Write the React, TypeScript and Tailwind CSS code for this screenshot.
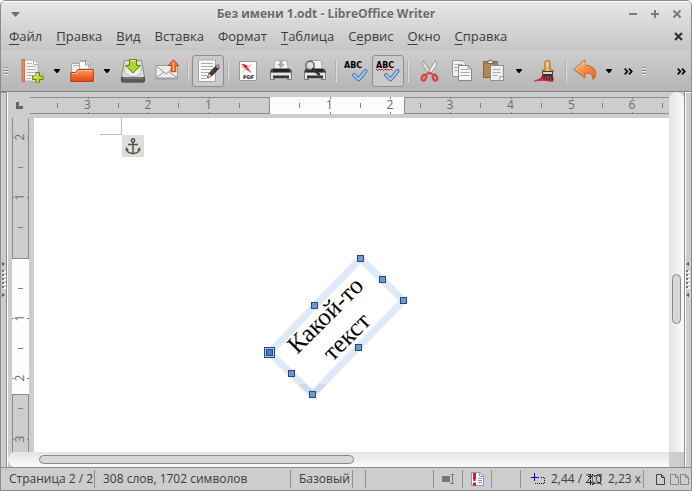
import React from "react";

const MENU: [string, string, string][] = [
  ["", "Ф", "айл"],
  ["", "П", "равка"],
  ["", "В", "ид"],
  ["Вст", "а", "вка"],
  ["Фо", "р", "мат"],
  ["", "Т", "аблица"],
  ["С", "е", "рвис"],
  ["", "О", "кно"],
  ["", "С", "правка"],
];

function Svg({ children }: { children: React.ReactNode }) {
  return (
    <svg width="24" height="24" viewBox="0 0 24 24" fill="none" aria-hidden="true">
      {children}
    </svg>
  );
}

function Tool({ label, width = "w-[34px]", pressed = false, children }: { label: string; width?: string; pressed?: boolean; children: React.ReactNode }) {
  return (
    <button
      type="button"
      aria-label={label}
      className={
        "flex h-8 shrink-0 items-center justify-center rounded-[3px] " +
        width +
        (pressed ? " border border-[#8e8e8e] bg-[#cacaca]" : "")
      }
    >
      {children}
    </button>
  );
}

function Arrow({ label }: { label: string }) {
  return (
    <button type="button" aria-label={label} className="flex h-8 w-[18px] shrink-0 items-center justify-center">
      <svg width="6" height="4" viewBox="0 0 6 4" aria-hidden="true">
        <path d="M0 0h6v1L3.500 4h-1L0 1z" fill="#000" />
      </svg>
    </button>
  );
}

function Sep() {
  return (
    <div className="flex h-8 w-2 shrink-0 items-center justify-center">
      <div className="h-[22px] w-[2px] border-l border-[#b0b0b0] bg-[#dddddd]" />
    </div>
  );
}

function Grip() {
  return (
    <div className="flex w-1 shrink-0 flex-col gap-px">
      {[0, 1, 2].map((i) => (
        <div key={i} className="h-[2px] border-b border-[#eeeeee] bg-[#858585]" />
      ))}
    </div>
  );
}

function More({ label }: { label: string }) {
  return (
    <button type="button" aria-label={label} className="flex h-8 w-5 shrink-0 items-center justify-center">
      <svg width="9" height="7" viewBox="0 0 9 7" fill="none" stroke="#000" strokeWidth="1.700" aria-hidden="true">
        <path d="M.7.6l2.700 2.900L.7 6.400M5 .6l2.700 2.900L5 6.400" />
      </svg>
    </button>
  );
}

const NewIcon = () => (
  <Svg>
    <path d="M3.500 1h10l4.500 4.500V22H3.500z" fill="#f4f4f2" stroke="#b2b2ae" />
    <path d="M13.500 1v4.500H18" fill="#fff" stroke="#aaa" />
    <path d="M7 4.500h5M7 7.500h9M7 10.500h9M7 13.500h9M7 16.500h6M7 19.500h4" stroke="#b5b5b2" />
    <path d="M2 .5h2.500v22H2z" fill="#ef8758" stroke="#c95320" strokeWidth=".7" />
    <path d="M16 13.500h3.500V17H23v3.500h-3.500V24H16v-3.500h-3.500V17H16z" fill="#b9dc36" stroke="#5e860d" />
    <path d="M17 14.500V18h-3.500" stroke="#e7f590" />
  </Svg>
);

const OpenIcon = () => (
  <Svg>
    <path d="M1.500 19V4.500h7l2-3H17l3 3V19z" fill="#efefed" stroke="#a8a8a8" />
    <path d="M3.500 6.500h6M9.500 10V2.500h6l3 3V10z" fill="#fff" stroke="#b5b5b5" />
    <path d="M15.500 2v4h4" stroke="#999" />
    <path d="M.8 13.500h5l2-3h15.500v12H.8z" fill="url(#folder)" stroke="#bb3e10" />
    <path d="M2 14.500h4.500l2-3h13.800" stroke="#ffc19b" />
    <defs>
      <linearGradient id="folder" x1="0" y1="10" x2="0" y2="23" gradientUnits="userSpaceOnUse">
        <stop stopColor="#f9a16a" />
        <stop offset=".6" stopColor="#ef642b" />
        <stop offset="1" stopColor="#df4310" />
      </linearGradient>
    </defs>
  </Svg>
);

const SaveIcon = () => (
  <Svg>
    <path d="M3.500 1.500h17l3 16.500v5H.5v-5z" fill="#dededc" stroke="#8a8a8a" />
    <ellipse cx="12" cy="11" rx="8.500" ry="6.500" fill="#ececea" stroke="#bbb" />
    <path d="M.5 18.500h23v3.500l-1 1h-21l-1-1z" fill="#5c5c5c" stroke="#494949" />
    <path d="M2 19h20" stroke="#999" />
    <path d="M8.500.5h7v6h4L12 14 4.500 6.500h4z" fill="#afd62e" stroke="#5a860c" />
    <path d="M9.500 1.500h5" stroke="#e6f795" />
  </Svg>
);

const MailIcon = () => (
  <Svg>
    <path d="M1 6.500h21.500V19H1z" fill="#ededeb" stroke="#9b9b9b" />
    <path d="M1.500 7L11 15l10-8M1.500 18.500L9 13M22 18.500L14 13" stroke="#8c8c8c" strokeWidth=".9" />
    <path d="M0 20h23" stroke="#777" strokeOpacity=".5" />
    <path d="M18.500.8l5.200 5.700h-2.900v6.200h-4.600V6.500h-2.900z" fill="#f37d3b" stroke="#c0400a" />
    <path d="M18.500 2.500v9" stroke="#f9b38a" />
  </Svg>
);

const EditIcon = () => (
  <Svg>
    <path d="M2.500 1h17v21.500h-17z" fill="#fafafa" stroke="#a6a6a6" />
    <path d="M5 4.500h12M5 7.500h12M5 10.500h11M5 13.500h8M5 16.500h6M5 19.500h5" stroke="#aaa" />
    <path d="M13 14.500l7.500-8 2.700 2.500-7.700 8-4 1.800z" fill="#353832" stroke="#20231f" />
    <path d="M13 14.500l2.500 2.500-4 1.800z" fill="#efd9a9" />
    <path d="M12 17.500l1 .7-1.500.8z" fill="#111" />
    <path d="M14.500 14.500l6-6.500" stroke="#6a8033" strokeWidth=".7" />
    <path d="M19.500 7.300l1.500-1.500q1-.6 2 .4t.4 2L22 9.700z" fill="#d58bb0" stroke="#754460" strokeWidth=".6" />
  </Svg>
);

const PdfIcon = () => (
  <Svg>
    <path d="M3.500 2.500h17v19h-17z" fill="#fff" stroke="#999996" />
    <path d="M5.500 4.500l5 1.500 5 8-5.500-3.500z" fill="#ee1b24" />
    <path d="M6 13.500L15 5.500l-3 4 3 4" stroke="#f3a5a0" strokeWidth=".8" />
    <path d="M5 8l6 2M5 5l4 5" stroke="#f59a94" strokeWidth=".7" />
    <text x="7" y="20" fontFamily="DejaVu Sans, sans-serif" fontWeight="700" fontSize="5" fill="#222">PDF</text>
  </Svg>
);

const Printer = () => (
  <>
    <path d="M4.500 12L6 1.500h12L19.500 12z" fill="#f4f4f3" stroke="#aaa" />
    <path d="M2.500 10.500h3v3h13v-3h3l1 3v5h-21v-5z" fill="#454545" stroke="#333" />
    <path d="M4 9.500h16v4H4z" fill="#242424" />
    <path d="M1.500 13.500h21v7h-21z" fill="#e5e5e2" stroke="#777" />
    <path d="M4 16.500h16v3H4z" fill="#343434" />
    <path d="M6 19.500h12v2H6z" fill="#bcbcba" />
  </>
);

const PrintIcon = () => (
  <Svg>
    <Printer />
    <path d="M10.500 2h3v3H16l-4 4-4-4h2.500z" fill="#aaa" />
  </Svg>
);

const PreviewIcon = () => (
  <Svg>
    <Printer />
    <circle cx="7" cy="6.500" r="4.200" fill="#dcdcda" fillOpacity=".8" stroke="#666" strokeWidth="1.500" />
    <path d="M10 10l6 5.500" stroke="#333" strokeWidth="2.500" strokeLinecap="round" />
  </Svg>
);

const SpellIcon = ({ wave = false }: { wave?: boolean }) => (
  <Svg>
    <text x="0" y="9" fontFamily="DejaVu Sans, sans-serif" fontWeight="700" fontSize="8" fill="#000">ABC</text>
    {wave && <path d="M0 10l1.500 1.500L3 10l1.500 1.500L6 10l1.500 1.500L9 10l1.500 1.500L12 10l1.500 1.500L15 10l1.500 1.500" stroke="#e20613" strokeWidth=".9" />}
    <path d="M10 16l4.500 4.500L21.500 12" stroke="#3465a4" strokeWidth="3.800" strokeLinecap="round" strokeLinejoin="round" />
    <path d="M10 16l4.500 4.500L21.500 12" stroke="#a5c8ee" strokeWidth="2.200" strokeLinecap="round" strokeLinejoin="round" />
  </Svg>
);

const CutIcon = () => (
  <Svg>
    <path d="M6.500 1.500q-2 2.500-.5 5.500l6 8.500 2.500-1.500z" fill="#dededc" stroke="#888" strokeWidth=".8" />
    <path d="M18.500 1.500q2 2.500.5 5.500l-6 8.500-2.500-1.500z" fill="#f0f0ef" stroke="#888" strokeWidth=".8" />
    <ellipse cx="7" cy="18.700" rx="2" ry="3" transform="rotate(20 7 18.700)" stroke="#d24545" strokeWidth="2.300" />
    <ellipse cx="18" cy="18.700" rx="2" ry="3" transform="rotate(-20 18 18.700)" stroke="#d24545" strokeWidth="2.300" />
    <path d="M8.500 16l4-2.500 4 2.500" stroke="#d54a4a" strokeWidth="2" />
  </Svg>
);

const CopyIcon = () => (
  <Svg>
    <path d="M2.500 1.500h10l3 3v13h-13z" fill="#f1f1f0" stroke="#959595" />
    <path d="M4.500 5.500h8M4.500 8.500h3M4.500 11.500h3" stroke="#aaa" />
    <path d="M8.500 6.500h10l3 3v12h-13z" fill="#f6f6f5" stroke="#888" />
    <path d="M10.500 10.500h7M10.500 13.500h9M10.500 16.500h9" stroke="#aaa" />
    <path d="M18 6.500v3.500h3.500" stroke="#888" />
  </Svg>
);

const PasteIcon = () => (
  <Svg>
    <path d="M1.500 2.500h14v16h-14z" fill="#b0894f" stroke="#8a622f" />
    <path d="M4.500 4.500V3h2q0-2 2-2t2 2h2v1.500z" fill="#e9e9e7" stroke="#666" />
    <path d="M8.500 6.500h13v15h-13z" fill="#f0f0ef" stroke="#8b8b8b" />
    <path d="M10.500 10.500h8M10.500 13.500h8M10.500 16.500h5" stroke="#aaa" />
    <path d="M18 21v-3.500h3.500" fill="#fff" stroke="#999" />
  </Svg>
);

const BrushIcon = () => (
  <Svg>
    <path d="M.5 21.500q7-1 9-5.500h10q2 4 0 6.500-8-1-19-1z" fill="#c9343b" />
    <path d="M12 11V3.500q0-2 2.500-2t2.500 2V11h3v2H9.500v-2z" fill="#efbd63" stroke="#9b651b" />
    <path d="M14 3.500v4" stroke="#fce4ac" />
    <path d="M9.500 12.500h10v3h-10z" fill="#d5d5d3" stroke="#3b3b3b" />
    <path d="M9.500 15.500h10l1 6q-7 0-12-2z" fill="#42282c" />
    <path d="M11 17l-2 3M13 17l-1 4M15 17v4M17 17l1 4" stroke="#dc4a50" />
    <path d="M1 22q9-2 19 .5" stroke="#d92a34" />
  </Svg>
);

const UndoIcon = () => (
  <Svg>
    <path d="M.8 10.500l11-9.500v5q11 1 11 9-.2 4-3 5.500 1-7-8-6.500v5z" fill="url(#undo)" stroke="#c86522" />
    <path d="M2.500 10.500l8.500-7.500v4" stroke="#ffdaa8" />
    <defs>
      <linearGradient id="undo" x1="0" y1="0" x2="20" y2="20" gradientUnits="userSpaceOnUse">
        <stop stopColor="#fbc477" />
        <stop offset="1" stopColor="#ee682e" />
      </linearGradient>
    </defs>
  </Svg>
);

function Splitter({ side }: { side: "left" | "right" }) {
  return (
    <div className={side === "left" ? "flex w-[7px] shrink-0 items-center justify-center border-r border-white bg-[#cdcdcd] shadow-[inset_-1px_1px_0_#8c8c8c]" : "flex w-[7px] shrink-0 items-center justify-center border-l border-[#8c8c8c] bg-[#cdcdcd] shadow-[inset_1px_1px_0_#ffffff]"}>
      <svg className="shrink-0" width="4" height="36" viewBox="0 0 4 36" aria-hidden="true">
        {[9, 13, 17, 21, 25].map((y) => (
          <g key={y}>
            <rect x="1" y={y} width="3" height="2" fill="#fff" />
            <rect y={y - 1} width="2" height="2" fill="#777" />
          </g>
        ))}
        <path d={side === "left" ? "M0 0v4l3-2zM0 31v4l3-2z" : "M3 0v4L0 2zM3 31v4l-3-2z"} fill="#555" />
      </svg>
    </div>
  );
}

const H_TICKS: [string, string][] = [
  ["3", "w-[61px]"],
  ["2", "w-[60px]"],
  ["1", "w-[61px]"],
  ["", "w-[60px]"],
  ["1", "w-[61px]"],
  ["2", "w-[60px]"],
  ["3", "w-[60px]"],
  ["4", "w-[61px]"],
  ["5", "w-[61px]"],
  ["6", "w-[60px]"],
];

function HorizontalRuler() {
  return (
    <div className="relative flex h-[17px] min-w-0 flex-1 overflow-hidden">
      <div className="w-[240px] shrink-0 border-y border-r border-[#8b8b8b]" />
      <div className="w-[134px] shrink-0 bg-[#fdfdfd]" />
      <div className="flex-1 border-y border-l border-[#8b8b8b]" />
      <div className="absolute inset-y-0 left-[27px] flex text-[12px] text-[#6c6c6c]">
        {H_TICKS.map(([n, w], i) => (
          <div key={i} className={"relative flex shrink-0 items-center justify-center " + w}>
            <span className="absolute left-0 h-[5px] w-px bg-[#808080]" />
            {n && <span className="absolute inset-y-0 left-1/2 w-px border-y-2 border-[#808080]" />}
            <span>{n}</span>
          </div>
        ))}
        <span className="my-[6px] w-px bg-[#808080]" />
      </div>
    </div>
  );
}

const V_TICKS: [string, string][] = [
  ["2", "h-[61px]"],
  ["1", "h-[60px]"],
  ["", "h-[61px]"],
  ["1", "h-[60px]"],
  ["2", "h-[60px]"],
  ["3", "h-[61px]"],
];

function VerticalRuler() {
  return (
    <div className="relative flex w-[17px] shrink-0 flex-col overflow-hidden">
      <div className="h-[141px] shrink-0 border-x border-b border-[#8b8b8b]" />
      <div className="h-[135px] shrink-0 bg-[#fdfdfd]" />
      <div className="flex-1 border-x border-t border-[#8b8b8b]" />
      <div className="absolute inset-x-0 top-[-12px] flex flex-col text-[12px] text-[#6c6c6c]">
        {V_TICKS.map(([n, h], i) => (
          <div key={i} className={"relative flex shrink-0 items-center justify-center " + h}>
            <span className="absolute top-0 h-px w-[5px] bg-[#808080]" />
            {n && <span className="absolute inset-x-0 top-1/2 h-px border-x-2 border-[#808080]" />}
            <span className="-rotate-90 leading-4">{n}</span>
          </div>
        ))}
      </div>
    </div>
  );
}

const HANDLES = [
  [360, 258],
  [382, 279],
  [403, 300],
  [358, 347],
  [312, 394],
  [291, 373],
  [314, 305],
];

function DocumentPage() {
  return (
    <div className="relative min-w-0 flex-1 overflow-hidden bg-white">
      <svg className="absolute inset-0" width="420" height="334" viewBox="34 118 420 334" aria-hidden="true">
        <path d="M121.500 118v16.500H100" fill="none" stroke="#bbbbbb" />
        <path d="M269.500 352.500l91-94 43 42-91 94z" fill="none" stroke="#deeaf8" strokeWidth="7" />
        <path d="M298 384h8l6.500 5.500L319 384h8l-14.500 14z" fill="#cbdbe9" />
        {HANDLES.map(([x, y]) => (
          <rect key={x} x={x - 2.500} y={y - 2.500} width="6" height="6" fill="#7298cb" stroke="#1f4a87" />
        ))}
        <rect x="264.500" y="347.500" width="10" height="10" fill="#b1c8e6" stroke="#1f4a87" />
        <rect x="266.500" y="349.500" width="6" height="6" fill="#4a7abb" stroke="#1f4a87" />
      </svg>
      <div className="absolute top-[17px] left-[88px] flex h-[22px] w-[22px] items-center justify-center bg-[#dcded9]">
        <svg width="16" height="17" viewBox="0 0 16 17" fill="none" stroke="#4f534d" strokeWidth="1.500" aria-label="Привязка">
          <circle cx="8" cy="2.500" r="1.700" />
          <path d="M8 4v11.500M3 6.500h10M1.500 10.500q.5 5 6.500 5t6.500-5" />
          <path d="M.5 13l.5-4 3 3zM15.500 13l-.5-4-3 3z" fill="#4f534d" stroke="none" />
        </svg>
      </div>
      <p className="absolute top-[178px] left-[242px] w-[120px] -rotate-45 text-center font-['Liberation_Serif',serif] text-[25px] leading-[30px] text-black">
        Какой-то
        <br />
        текст
      </p>
    </div>
  );
}

function Cell({ width, children }: { width: string; children?: React.ReactNode }) {
  return (
    <div className={"flex h-[18px] shrink-0 items-center overflow-hidden border-r border-[#909090] whitespace-nowrap " + width}>
      {children}
    </div>
  );
}

function PageGlyph({ label, color }: { label: string; color: string }) {
  return (
    <button type="button" aria-label={label} className="shrink-0">
      <svg width="9" height="11" viewBox="0 0 9 11" fill="none" stroke={color} aria-hidden="true">
        <path d="M.5.5h5l3 3v7h-8zM5.500.5v3h3" />
      </svg>
    </button>
  );
}

export default function App() {
  return (
    <div className="flex h-screen flex-col overflow-hidden rounded-t-[5px] border border-[#8b8b8b] bg-[#cdcdcd] font-['Open_Sans','Noto_Sans',sans-serif] text-[13px] text-[#3c3c3c]">
      <header className="shrink-0 bg-linear-to-b from-[#e7e7e7] to-[#c6c6c6]">
        <div className="flex h-[25px] items-center border-t border-white">
          <button type="button" aria-label="Меню окна" className="flex w-[29px] shrink-0 justify-center">
            <svg width="9" height="5" viewBox="0 0 9 5" aria-hidden="true">
              <path d="M0 0h9L4.500 5z" fill="#6b6b6b" />
            </svg>
          </button>
          <h1 className="flex-1 truncate text-center text-[12px] leading-5 font-bold text-[#6a6a6a] [text-shadow:0_1px_0_#f3f3f3]">
            Без имени 1.odt - LibreOffice Writer
          </h1>
          <div className="flex shrink-0 pr-[3px]">
            {[
              ["Свернуть", "M1 5h8"],
              ["Развернуть", "M1 5h8M5 1v8"],
              ["Закрыть", "M1.500 1.500l7 7M8.500 1.500l-7 7"],
            ].map(([label, d]) => (
              <button key={label} type="button" aria-label={label} className="flex h-5 w-[22px] items-center justify-center">
                <svg width="10" height="10" viewBox="0 0 10 10" fill="none" stroke="#7b7b7b" strokeWidth="2" aria-hidden="true">
                  <path d={d} />
                </svg>
              </button>
            ))}
          </div>
        </div>
        <nav className="flex h-[25px] items-start pl-px">
          {MENU.map(([a, key, b]) => (
            <button key={a + key + b} type="button" className="shrink-0 px-[7px] leading-5">
              {a}
              <span className="underline underline-offset-[3px]">{key}</span>
              {b}
            </button>
          ))}
          <button type="button" aria-label="Закрыть документ" className="ml-auto flex h-5 w-[26px] items-center justify-center">
            <svg width="9" height="9" viewBox="0 0 9 9" fill="none" stroke="#333" strokeWidth="2.200" aria-hidden="true">
              <path d="M1 1l7 7M8 1L1 8" />
            </svg>
          </button>
        </nav>
      </header>

      <div role="toolbar" aria-label="Стандартная" className="flex h-[41px] shrink-0 items-center border-b border-[#858585] bg-linear-to-b from-[#cecece] to-[#b5b5b5] pl-[3px]">
        <Grip />
        <div className="w-2 shrink-0" />
        <Tool label="Создать" width="w-8"><NewIcon /></Tool>
        <Arrow label="Создать: варианты" />
        <Tool label="Открыть" width="w-8"><OpenIcon /></Tool>
        <Arrow label="Открыть: варианты" />
        <Tool label="Сохранить"><SaveIcon /></Tool>
        <Tool label="Отправить"><MailIcon /></Tool>
        <Sep />
        <Tool label="Режим правки" width="w-8" pressed><EditIcon /></Tool>
        <Sep />
        <Tool label="Экспорт в PDF" width="w-8"><PdfIcon /></Tool>
        <Tool label="Печать"><PrintIcon /></Tool>
        <Tool label="Просмотр"><PreviewIcon /></Tool>
        <Sep />
        <Tool label="Орфография" width="w-8"><SpellIcon /></Tool>
        <Tool label="Автопроверка" width="w-8" pressed><SpellIcon wave /></Tool>
        <Sep />
        <Tool label="Вырезать"><CutIcon /></Tool>
        <Tool label="Копировать" width="w-8"><CopyIcon /></Tool>
        <Tool label="Вставить" width="w-8"><PasteIcon /></Tool>
        <Arrow label="Вставить: варианты" />
        <Tool label="Копировать формат"><BrushIcon /></Tool>
        <Sep />
        <Tool label="Отменить" width="w-[30px]"><UndoIcon /></Tool>
        <Arrow label="Отменить: варианты" />
        <More label="Ещё" />
        <div className="w-1 shrink-0" />
        <Grip />
        <div className="ml-auto">
          <More label="Ещё панели" />
        </div>
      </div>

      <div className="flex min-h-0 flex-1 border-b border-[#8c8c8c]">
        <Splitter side="left" />
        <main className="flex min-w-0 flex-1 flex-col">
          <div className="flex min-h-0 flex-1">
            <div className="flex min-w-0 flex-1 flex-col">
              <div className="flex h-[26px] shrink-0 items-center">
                <div className="flex w-[22px] shrink-0 justify-center">
                  <svg width="7" height="7" viewBox="0 0 7 7" aria-hidden="true">
                    <path d="M0 0h3v4h4v3H0z" fill="#666" />
                  </svg>
                </div>
                <HorizontalRuler />
              </div>
              <div className="flex min-h-0 flex-1 gap-[5px] pl-1">
                <VerticalRuler />
                <DocumentPage />
              </div>
            </div>
            <div className="flex w-[15px] shrink-0 flex-col items-center justify-center rounded-t-lg bg-linear-to-r from-[#e4e4e4] to-[#fafafa] pt-[54px]">
              <div className="h-[50px] w-[9px] rounded-full border border-[#8a8a8a] bg-[#d7d7d7]" />
            </div>
          </div>
          <div className="flex h-[15px] shrink-0">
            <div className="flex flex-1 items-center rounded-l-lg bg-linear-to-b from-[#e4e4e4] to-[#fafafa] pl-[31px]">
              <div className="h-[9px] w-1/2 rounded-full border border-[#8a8a8a] bg-[#d7d7d7]" />
            </div>
            <div className="w-[15px] shrink-0" />
          </div>
        </main>
        <Splitter side="right" />
      </div>

      <footer className="flex h-[22px] shrink-0 items-center text-[12px]">
        <Cell width="w-[94px] pl-2">Страница 2 / 2</Cell>
        <Cell width="w-[196px] pl-2">308 слов, 1702 символов</Cell>
        <Cell width="w-[62px] pl-2">Базовый</Cell>
        <Cell width="w-[13px]" />
        <Cell width="w-[68px]" />
        <Cell width="w-[29px] justify-center">
          <svg width="12" height="10" viewBox="0 0 12 10" fill="none" aria-hidden="true">
            <path d="M0 2h8v6H0z" fill="#777" />
            <path d="M8.500.5H12M8.500 9.500H12M10.500.5v9" stroke="#777" />
          </svg>
        </Cell>
        <Cell width="w-[29px] justify-center">
          <svg width="14" height="14" viewBox="0 0 14 14" fill="none" aria-hidden="true">
            <path d="M1.500.5h8l4 4v9h-12z" fill="#fff" stroke="#9290d8" />
            <path d="M9.500.5v4h4M8 6.500h4M8 8.500h4M8 10.500h4" stroke="#9290d8" />
            <path d="M3 1h3v5L5.500 9h-2L3 6zM3 10.500h3v3H3z" fill="#ef1020" />
          </svg>
        </Cell>
        <Cell width="w-[29px]" />
        <Cell width="w-[123px] pl-[10px]">
          <div className="flex w-[57px] shrink-0 items-center">
            <svg className="mr-[6px] shrink-0" width="14" height="12" viewBox="0 0 14 12" fill="none" aria-hidden="true">
              <path d="M3.500 0v8M0 4.500h8" stroke="#0000e6" />
              <path d="M4 10.500h10M13.500 5v6M10 4.500h4" stroke="#111" strokeDasharray="1 1" />
            </svg>
            <span>2,44 / 2,0</span>
          </div>
          <svg className="mr-[6px] shrink-0" width="14" height="13" viewBox="0 0 14 13" fill="none" stroke="#111" aria-hidden="true">
            <path d="M4.500 2.500h8v8h-8z" strokeDasharray="1 1" />
            <path d="M0 3.500h4M0 9.500h4M2.500 1v11M4 1l3 3M14 1l-3 3M4 12l3-3M14 12l-3-3" strokeDasharray="2 1" />
          </svg>
          <span>2,23 x</span>
        </Cell>
        <div className="flex flex-1 items-center gap-1 pl-3">
          <PageGlyph label="Одна страница" color="#444" />
          <div className="flex gap-px pl-px">
            <PageGlyph label="Две страницы" color="#858585" />
            <PageGlyph label="Разворот" color="#858585" />
          </div>
        </div>
      </footer>
    </div>
  );
}
